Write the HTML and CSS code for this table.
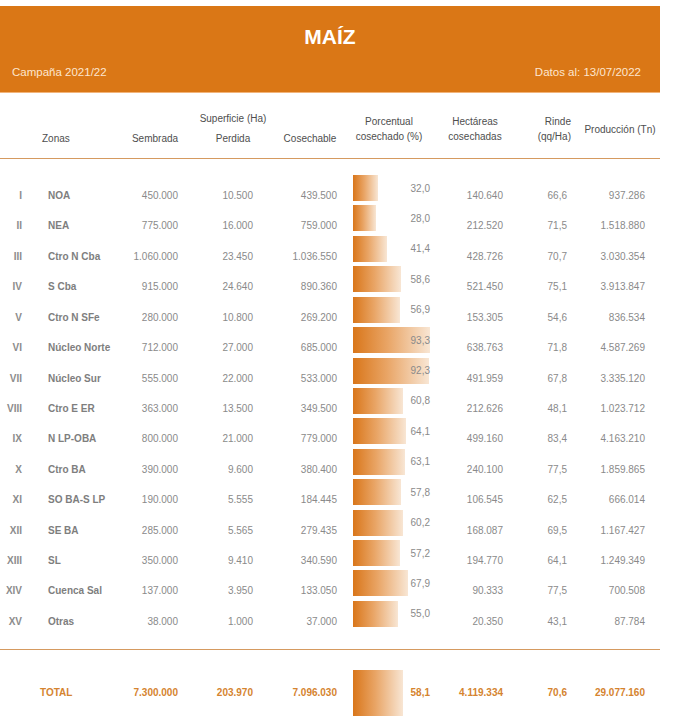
FILE: index.html
```html
<!DOCTYPE html>
<html lang="es">
<head>
<meta charset="utf-8">
<title>Maíz</title>
<link rel="stylesheet" href="styles.css">
</head>
<body>
<div class="page">
  <header class="banner">
    <h1 class="title">MAÍZ</h1>
    <div class="sub">
      <span>Campaña 2021/22</span>
      <span>Datos al: 13/07/2022</span>
    </div>
  </header>

  <div class="thead">
    <div class="h-group">Superficie (Ha)</div>
    <div class="h h-zonas">Zonas</div>
    <div class="h h-semb">Sembrada</div>
    <div class="h h-perd">Perdida</div>
    <div class="h h-cos">Cosechable</div>
    <div class="h2 h-pct">Porcentual<br>cosechado (%)</div>
    <div class="h2 h-hect">Hectáreas<br>cosechadas</div>
    <div class="h2 h-rinde">Rinde<br>(qq/Ha)</div>
    <div class="h2 h-prod">Producción (Tn)</div>
  </div>

  <div class="tbody">
    <div class="row"><div class="c num-r">I</div><div class="c zona">NOA</div><div class="c n c3">450.000</div><div class="c n c4">10.500</div><div class="c n c5">439.500</div><div class="pct"><div class="bar" style="width:25px"></div><span class="pv">32,0</span></div><div class="c n c7">140.640</div><div class="c n c8">66,6</div><div class="c n c9">937.286</div></div>
    <div class="row"><div class="c num-r">II</div><div class="c zona">NEA</div><div class="c n c3">775.000</div><div class="c n c4">16.000</div><div class="c n c5">759.000</div><div class="pct"><div class="bar" style="width:23px"></div><span class="pv">28,0</span></div><div class="c n c7">212.520</div><div class="c n c8">71,5</div><div class="c n c9">1.518.880</div></div>
    <div class="row"><div class="c num-r">III</div><div class="c zona">Ctro N Cba</div><div class="c n c3">1.060.000</div><div class="c n c4">23.450</div><div class="c n c5">1.036.550</div><div class="pct"><div class="bar" style="width:34px"></div><span class="pv">41,4</span></div><div class="c n c7">428.726</div><div class="c n c8">70,7</div><div class="c n c9">3.030.354</div></div>
    <div class="row"><div class="c num-r">IV</div><div class="c zona">S Cba</div><div class="c n c3">915.000</div><div class="c n c4">24.640</div><div class="c n c5">890.360</div><div class="pct"><div class="bar" style="width:48px"></div><span class="pv">58,6</span></div><div class="c n c7">521.450</div><div class="c n c8">75,1</div><div class="c n c9">3.913.847</div></div>
    <div class="row"><div class="c num-r">V</div><div class="c zona">Ctro N SFe</div><div class="c n c3">280.000</div><div class="c n c4">10.800</div><div class="c n c5">269.200</div><div class="pct"><div class="bar" style="width:47px"></div><span class="pv">56,9</span></div><div class="c n c7">153.305</div><div class="c n c8">54,6</div><div class="c n c9">836.534</div></div>
    <div class="row"><div class="c num-r">VI</div><div class="c zona">Núcleo Norte</div><div class="c n c3">712.000</div><div class="c n c4">27.000</div><div class="c n c5">685.000</div><div class="pct"><div class="bar" style="width:77px"></div><span class="pv">93,3</span></div><div class="c n c7">638.763</div><div class="c n c8">71,8</div><div class="c n c9">4.587.269</div></div>
    <div class="row"><div class="c num-r">VII</div><div class="c zona">Núcleo Sur</div><div class="c n c3">555.000</div><div class="c n c4">22.000</div><div class="c n c5">533.000</div><div class="pct"><div class="bar" style="width:76px"></div><span class="pv">92,3</span></div><div class="c n c7">491.959</div><div class="c n c8">67,8</div><div class="c n c9">3.335.120</div></div>
    <div class="row"><div class="c num-r">VIII</div><div class="c zona">Ctro E ER</div><div class="c n c3">363.000</div><div class="c n c4">13.500</div><div class="c n c5">349.500</div><div class="pct"><div class="bar" style="width:50px"></div><span class="pv">60,8</span></div><div class="c n c7">212.626</div><div class="c n c8">48,1</div><div class="c n c9">1.023.712</div></div>
    <div class="row"><div class="c num-r">IX</div><div class="c zona">N LP-OBA</div><div class="c n c3">800.000</div><div class="c n c4">21.000</div><div class="c n c5">779.000</div><div class="pct"><div class="bar" style="width:53px"></div><span class="pv">64,1</span></div><div class="c n c7">499.160</div><div class="c n c8">83,4</div><div class="c n c9">4.163.210</div></div>
    <div class="row"><div class="c num-r">X</div><div class="c zona">Ctro BA</div><div class="c n c3">390.000</div><div class="c n c4">9.600</div><div class="c n c5">380.400</div><div class="pct"><div class="bar" style="width:52px"></div><span class="pv">63,1</span></div><div class="c n c7">240.100</div><div class="c n c8">77,5</div><div class="c n c9">1.859.865</div></div>
    <div class="row"><div class="c num-r">XI</div><div class="c zona">SO BA-S LP</div><div class="c n c3">190.000</div><div class="c n c4">5.555</div><div class="c n c5">184.445</div><div class="pct"><div class="bar" style="width:48px"></div><span class="pv">57,8</span></div><div class="c n c7">106.545</div><div class="c n c8">62,5</div><div class="c n c9">666.014</div></div>
    <div class="row"><div class="c num-r">XII</div><div class="c zona">SE BA</div><div class="c n c3">285.000</div><div class="c n c4">5.565</div><div class="c n c5">279.435</div><div class="pct"><div class="bar" style="width:50px"></div><span class="pv">60,2</span></div><div class="c n c7">168.087</div><div class="c n c8">69,5</div><div class="c n c9">1.167.427</div></div>
    <div class="row"><div class="c num-r">XIII</div><div class="c zona">SL</div><div class="c n c3">350.000</div><div class="c n c4">9.410</div><div class="c n c5">340.590</div><div class="pct"><div class="bar" style="width:47px"></div><span class="pv">57,2</span></div><div class="c n c7">194.770</div><div class="c n c8">64,1</div><div class="c n c9">1.249.349</div></div>
    <div class="row"><div class="c num-r">XIV</div><div class="c zona">Cuenca Sal</div><div class="c n c3">137.000</div><div class="c n c4">3.950</div><div class="c n c5">133.050</div><div class="pct"><div class="bar" style="width:55px"></div><span class="pv">67,9</span></div><div class="c n c7">90.333</div><div class="c n c8">77,5</div><div class="c n c9">700.508</div></div>
    <div class="row"><div class="c num-r">XV</div><div class="c zona">Otras</div><div class="c n c3">38.000</div><div class="c n c4">1.000</div><div class="c n c5">37.000</div><div class="pct"><div class="bar" style="width:45px"></div><span class="pv">55,0</span></div><div class="c n c7">20.350</div><div class="c n c8">43,1</div><div class="c n c9">87.784</div></div>
  </div>

  <div class="total">
    <div class="t-label">TOTAL</div>
    <div class="t n c3">7.300.000</div>
    <div class="t n c4">203.970</div>
    <div class="t n c5">7.096.030</div>
    <div class="t-pct"><div class="bar bar-total"></div><span class="t pv-t">58,1</span></div>
    <div class="t n c7">4.119.334</div>
    <div class="t n c8">70,6</div>
    <div class="t n c9">29.077.160</div>
  </div>
</div>
</body>
</html>
```

FILE: styles.css
```css
* { box-sizing: border-box; }

html, body {
  margin: 0;
  padding: 0;
  background: #ffffff;
}

body {
  font-family: "Liberation Sans", Arial, sans-serif;
  font-size: 10px;
  color: #8a8a8a;
}

.page {
  width: 660px;
  padding-top: 6px;
  --cols: 40px 80px 70px 80px 80px 90px 80px 60px 80px;
}

/* Banner */
.banner {
  background: #da7716;
  height: 87px;
  padding: 19px 19px 0 12px;
  border-bottom: 1px solid #f2b47a;
}

.title {
  margin: 0;
  text-align: center;
  color: #ffffff;
  font-size: 21px;
  line-height: 24px;
  font-weight: bold;
  padding-left: 7px;
}

.sub {
  display: flex;
  justify-content: space-between;
  margin-top: 16px;
  font-size: 11.5px;
  line-height: 14px;
  color: #fde6cf;
}

/* Table header */
.thead {
  display: grid;
  grid-template-columns: var(--cols);
  grid-template-rows: 20px 20px;
  padding: 16px 0 9px;
  border-bottom: 1px solid #d59a60;
  color: #4e4e4e;
  font-size: 10px;
}

.h-group {
  grid-column: 3 / 6;
  grid-row: 1;
  text-align: center;
  line-height: 20px;
  padding-right: 4px;
}

.h {
  grid-row: 2;
  line-height: 20px;
  text-align: center;
}

.h-zonas { grid-column: 2; text-align: left; padding-left: 2px; }
.h-semb { grid-column: 3; }
.h-perd { grid-column: 4; padding-left: 6px; }
.h-cos { grid-column: 5; }

.h2 {
  grid-row: 1 / 3;
  align-self: center;
  line-height: 15px;
  text-align: center;
}

.h-pct { grid-column: 6; padding-right: 12px; }
.h-hect { grid-column: 7; padding-right: 10px; }
.h-rinde { grid-column: 8; text-align: right; padding-right: 9px; }
.h-prod { grid-column: 9; }

/* Body */
.tbody {
  display: grid;
  grid-auto-rows: 30.43px;
  padding: 14px 0 19.5px;
  border-bottom: 1px solid #d59a60;
}

.row {
  display: grid;
  grid-template-columns: var(--cols);
}

.c {
  padding-top: 17px;
  line-height: 12px;
  white-space: nowrap;
}

.num-r {
  text-align: right;
  padding-right: 18px;
  font-weight: bold;
  color: #8c8c8c;
}

.zona {
  padding-left: 8px;
  font-weight: bold;
  color: #7e7e7e;
}

.n { text-align: right; }
.c3 { padding-right: 12px; }
.c4 { padding-right: 17px; }
.c5 { padding-right: 13px; }
.c7 { padding-right: 17px; }
.c8 { padding-right: 13px; }
.c9 { padding-right: 15px; }

.pct {
  display: grid;
  padding: 0 10px 0 3px;
}

.bar {
  grid-area: 1 / 1;
  align-self: start;
  margin-top: 2px;
  height: 26px;
  background: linear-gradient(to right, #d9761a 0%, #e9a566 45%, #f8e6d4 100%);
}

.pv {
  grid-area: 1 / 1;
  justify-self: end;
  align-self: start;
  margin-top: 9.5px;
  line-height: 12px;
  color: #8a8a8a;
}

/* Total */
.total {
  display: grid;
  grid-template-columns: var(--cols);
  align-items: center;
  margin-top: 20px;
  height: 46px;
  color: #d5842f;
  font-weight: bold;
}

.t-label {
  grid-column: 2;
  line-height: 12px;
  padding-top: 1px;
}

.t {
  line-height: 12px;
  padding-top: 1px;
  white-space: nowrap;
}

.t-pct {
  display: grid;
  align-items: center;
  padding: 0 10px 0 3px;
  height: 46px;
}

.bar-total {
  margin-top: 0;
  height: 46px;
  width: 50px;
}

.pv-t {
  grid-area: 1 / 1;
  justify-self: end;
}
```
